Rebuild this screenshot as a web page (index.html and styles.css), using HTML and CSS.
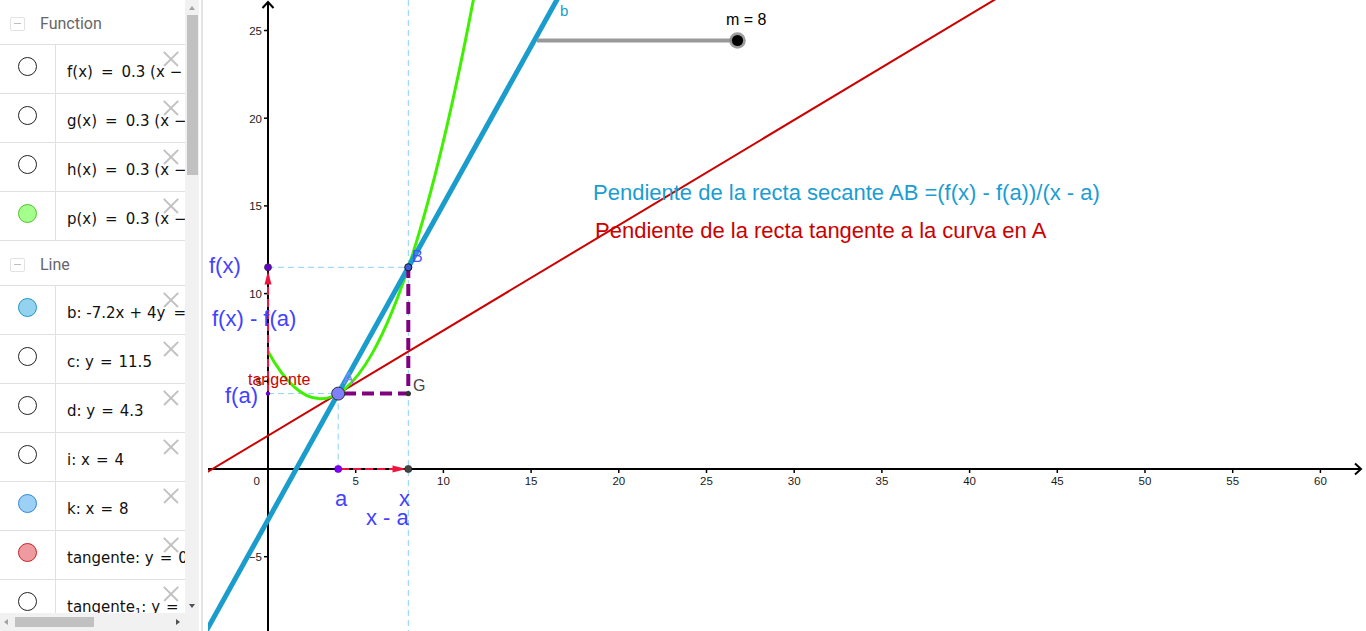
FILE: index.html
```html
<!DOCTYPE html>
<html lang="es">
<head>
<meta charset="utf-8">
<title>Pendiente de la recta secante</title>
<link rel="stylesheet" href="styles.css">
</head>
<body>
<aside class="sidebar">
  <div class="list">
    <section class="group">
      <div class="head"><span class="collapse"></span><span class="head-title">Function</span></div>
      <div class="row"><div class="vis"><span class="dot"></span></div><div class="expr">f(x)<span class="rel">=</span>0.3 (x<span class="bin">−</span>3)<sup>2</sup><span class="bin">+</span>4</div><span class="del"></span></div>
      <div class="row"><div class="vis"><span class="dot"></span></div><div class="expr">g(x)<span class="rel">=</span>0.3 (x<span class="bin">−</span>3)<sup>2</sup><span class="bin">+</span>4</div><span class="del"></span></div>
      <div class="row"><div class="vis"><span class="dot"></span></div><div class="expr">h(x)<span class="rel">=</span>0.3 (x<span class="bin">−</span>3)<sup>2</sup><span class="bin">+</span>4</div><span class="del"></span></div>
      <div class="row"><div class="vis"><span class="dot green"></span></div><div class="expr">p(x)<span class="rel">=</span>0.3 (x<span class="bin">−</span>3)<sup>2</sup><span class="bin">+</span>4</div><span class="del"></span></div>
    </section>
    <section class="group next">
      <div class="head"><span class="collapse"></span><span class="head-title">Line</span></div>
      <div class="row"><div class="vis"><span class="dot cyan"></span></div><div class="expr">b: -7.2x<span class="bin">+</span>4y<span class="rel">=</span>-11.6</div><span class="del"></span></div>
      <div class="row"><div class="vis"><span class="dot"></span></div><div class="expr">c: y<span class="rel r2">=</span>11.5</div><span class="del"></span></div>
      <div class="row"><div class="vis"><span class="dot"></span></div><div class="expr">d: y<span class="rel r2">=</span>4.3</div><span class="del"></span></div>
      <div class="row"><div class="vis"><span class="dot"></span></div><div class="expr">i: x<span class="rel r2">=</span>4</div><span class="del"></span></div>
      <div class="row"><div class="vis"><span class="dot blue"></span></div><div class="expr">k: x<span class="rel r2">=</span>8</div><span class="del"></span></div>
      <div class="row"><div class="vis"><span class="dot red"></span></div><div class="expr">tangente: y<span class="rel r2">=</span>0.6x<span class="bin">+</span>1.9</div><span class="del"></span></div>
      <div class="row"><div class="vis"><span class="dot"></span></div><div class="expr">tangente<sub>1</sub>: y<span class="rel r2">=</span>1.8x<span class="bin">−</span>2.9</div><span class="del"></span></div>
    </section>
  </div>
  <div class="vscroll">
    <div class="arrow-box"><span class="arr up"></span></div>
    <div class="vthumb"></div>
    <div class="spacer"></div>
    <div class="arrow-box"><span class="arr down"></span></div>
  </div>
  <div class="hscroll">
    <div class="harrow-box left-box"><span class="arr left"></span></div>
    <div class="hthumb"></div>
    <div class="spacer"></div>
    <div class="harrow-box"><span class="arr right"></span></div>
  </div>
  <div class="corner"></div>
</aside>
<div class="divider"><div class="divider-line"></div></div>
<main class="graph">
<svg class="canvas" width="1158" height="631" viewBox="208 0 1158 631" xmlns="http://www.w3.org/2000/svg">
  <!-- auxiliary dashed lines -->
  <g stroke="#8ed2f2" stroke-width="1" stroke-dasharray="6 4" fill="none">
    <line x1="408.3" y1="0" x2="408.3" y2="631"/>
    <line x1="338.2" y1="393.6" x2="338.2" y2="469"/>
    <line x1="268" y1="267.3" x2="408.3" y2="267.3"/>
    <line x1="268" y1="393.6" x2="338.2" y2="393.6"/>
  </g>
  <!-- axes -->
  <g stroke="#000" stroke-width="2" fill="none">
    <line x1="208" y1="469" x2="1361" y2="469"/>
    <polyline points="1355,463.5 1361,469 1355,474.5"/>
    <line x1="268" y1="631" x2="268" y2="2"/>
    <polyline points="262.5,8 268,2 273.5,8"/>
  </g>
  <g stroke="#000" stroke-width="1.5">
    <line x1="355.7" y1="469" x2="355.7" y2="473"/>
    <line x1="443.4" y1="469" x2="443.4" y2="473"/>
    <line x1="531.1" y1="469" x2="531.1" y2="473"/>
    <line x1="618.8" y1="469" x2="618.8" y2="473"/>
    <line x1="706.5" y1="469" x2="706.5" y2="473"/>
    <line x1="794.2" y1="469" x2="794.2" y2="473"/>
    <line x1="881.9" y1="469" x2="881.9" y2="473"/>
    <line x1="969.6" y1="469" x2="969.6" y2="473"/>
    <line x1="1057.3" y1="469" x2="1057.3" y2="473"/>
    <line x1="1145" y1="469" x2="1145" y2="473"/>
    <line x1="1232.7" y1="469" x2="1232.7" y2="473"/>
    <line x1="1320.4" y1="469" x2="1320.4" y2="473"/>
    <line x1="264" y1="556.7" x2="268" y2="556.7"/>
    <line x1="264" y1="381.3" x2="268" y2="381.3"/>
    <line x1="264" y1="293.6" x2="268" y2="293.6"/>
    <line x1="264" y1="205.9" x2="268" y2="205.9"/>
    <line x1="264" y1="118.2" x2="268" y2="118.2"/>
    <line x1="264" y1="30.5" x2="268" y2="30.5"/>
  </g>
  <g class="tick" text-anchor="middle">
    <text x="355.7" y="485">5</text>
    <text x="443.4" y="485">10</text>
    <text x="531.1" y="485">15</text>
    <text x="618.8" y="485">20</text>
    <text x="706.5" y="485">25</text>
    <text x="794.2" y="485">30</text>
    <text x="881.9" y="485">35</text>
    <text x="969.6" y="485">40</text>
    <text x="1057.3" y="485">45</text>
    <text x="1145" y="485">50</text>
    <text x="1232.7" y="485">55</text>
    <text x="1320.4" y="485">60</text>
  </g>
  <g class="tick" text-anchor="end">
    <text x="260" y="485">0</text>
    <text x="262" y="561">−5</text>
    <text x="262" y="385.6">5</text>
    <text x="262" y="297.9">10</text>
    <text x="262" y="210.2">15</text>
    <text x="262" y="122.5">20</text>
    <text x="262" y="34.8">25</text>
  </g>
  <!-- tangent line -->
  <line x1="197.8" y1="477.8" x2="1057.3" y2="-37.9" stroke="#cc0000" stroke-width="2"/>
  <!-- function p -->
  <path d="M268,351.5 Q371.5,537.8 475,-8.6" stroke="#3ff000" stroke-width="3" fill="none"/>
  <!-- secant b -->
  <line x1="197.8" y1="646.2" x2="566.2" y2="-16.9" stroke="#1a9ccc" stroke-width="5"/>
  <!-- purple dashed legs -->
  <path d="M344,393.6 H408.3 V267.3" stroke="#800080" stroke-width="4" stroke-dasharray="12 6" fill="none"/>
  <!-- red vectors -->
  <g stroke="#f0143c" stroke-width="2" stroke-dasharray="8 4">
    <line x1="268" y1="391" x2="268" y2="284"/>
    <line x1="341" y1="469" x2="393" y2="469"/>
  </g>
  <g fill="#f0143c">
    <polygon points="268,271 264.5,284.5 271.5,284.5"/>
    <polygon points="406.5,469 392.5,465.5 392.5,472.5"/>
  </g>
  <!-- points -->
  <circle cx="268" cy="267.3" r="3.5" fill="#6a00d0" stroke="#333" stroke-width="0.8"/>
  <circle cx="268" cy="393.6" r="2.2" fill="#6a00d0"/>
  <circle cx="338.2" cy="469" r="3.6" fill="#7f00ff" stroke="#4a0090" stroke-width="0.6"/>
  <circle cx="408.3" cy="469" r="3.6" fill="#444" stroke="#222" stroke-width="0.6"/>
  <circle cx="408.3" cy="393.6" r="2.6" fill="#333"/>
  <circle cx="408.3" cy="267.3" r="3.6" fill="#3a5bd9" stroke="#111" stroke-width="1"/>
  <circle cx="338.2" cy="393.6" r="6.5" fill="#8080ff" stroke="#333" stroke-width="1"/>
  <!-- labels -->
  <text class="lbl" x="209" y="273">f(x)</text>
  <text class="lbl" x="212" y="326">f(x) - f(a)</text>
  <text class="lbl" x="225" y="403">f(a)</text>
  <text class="lbl" x="335" y="506">a</text>
  <text class="lbl" x="399" y="506">x</text>
  <text class="lbl" x="366" y="525">x - a</text>
  <text class="tan" x="248" y="385">tangente</text>
  <text class="pt pt-a" x="343" y="384">A</text>
  <text class="pt pt-b" x="412" y="262">B</text>
  <text class="pt pt-g" x="413" y="391">G</text>
  <text class="lb-b" x="560" y="15.5">b</text>
  <!-- slider -->
  <line x1="537" y1="40.5" x2="737" y2="40.5" stroke="#999" stroke-width="4"/>
  <circle cx="737.5" cy="40.5" r="8.3" fill="#8c8c8c" fill-opacity="0.85"/>
  <circle cx="737.5" cy="40.5" r="5.6" fill="#000"/>
  <text class="slider-lbl" x="726" y="25">m = 8</text>
  <!-- texts -->
  <text class="note note-sec" x="593" y="200">Pendiente de la recta secante AB =(f(x) - f(a))/(x - a)</text>
  <text class="note note-tan" x="595" y="238">Pendiente de la recta tangente a la curva en A</text>
</svg>
</main>
</body>
</html>
```
FILE: styles.css
```css
html, body {
  margin: 0;
  padding: 0;
}
body {
  width: 1366px;
  height: 631px;
  overflow: hidden;
  display: flex;
  background: #fff;
  font-family: "Liberation Sans", Arial, sans-serif;
}

/* ---------- sidebar ---------- */
.sidebar {
  flex: none;
  width: 199px;
  height: 631px;
  display: grid;
  grid-template-columns: 185px 14px;
  grid-template-rows: 613px 18px;
}
.list {
  overflow: hidden;
  background: #fff;
}
.group.next {
  border-top: 1px solid #e0e0e0;
}
.head {
  height: 44px;
  box-sizing: border-box;
  padding: 3px 0 0 10px;
  display: flex;
  align-items: center;
}
.collapse {
  width: 13px;
  height: 12px;
  border: 1px solid #e2e2e2;
  border-radius: 2px;
  display: flex;
  align-items: center;
  justify-content: center;
}
.collapse::before {
  content: "";
  width: 7px;
  height: 1.5px;
  background: #bdbdbd;
}
.head-title {
  margin-left: 15px;
  font-family: Roboto, "Open Sans", sans-serif;
  font-size: 16px;
  color: #666;
}
.row {
  position: relative;
  height: 48px;
  border-top: 1px solid #e0e0e0;
  display: flex;
  white-space: nowrap;
}
.vis {
  flex: none;
  width: 56px;
  border-right: 1px solid #e0e0e0;
  display: flex;
  justify-content: center;
  align-items: flex-start;
  padding-top: 12px;
  box-sizing: border-box;
}
.dot {
  width: 17px;
  height: 17px;
  border: 1px solid #222;
  border-radius: 50%;
  background: #fff;
}
.dot.green { background: #a4ff8c; border-color: #4fc22a; }
.dot.cyan { background: #93d3ef; border-color: #1f95c6; }
.dot.blue { background: #9dd0f5; border-color: #2f86d8; }
.dot.red { background: #ee9ba0; border-color: #cc1f24; }
.expr {
  padding: 18px 0 0 11px;
  font-family: "DejaVu Sans", sans-serif;
  font-size: 15px;
  line-height: 18px;
  color: #111;
}
.expr sup {
  font-size: 10px;
  line-height: 0;
}
.expr sub {
  font-size: 10px;
  line-height: 0;
}
.rel { margin: 0 8px; }
.rel.r2 { margin: 0 6px; }
.bin { margin: 0 5px; }
.del {
  position: absolute;
  left: 163px;
  top: 6px;
  width: 16px;
  height: 16px;
}
.del::before, .del::after {
  content: "";
  position: absolute;
  left: -2px;
  top: 7px;
  width: 20px;
  height: 1.6px;
  background: #c2c2c2;
  transform: rotate(45deg);
}
.del::after { transform: rotate(-45deg); }

/* scrollbars */
.vscroll {
  background: #f1f1f1;
  display: flex;
  flex-direction: column;
  align-items: center;
}
.arrow-box {
  flex: none;
  height: 15px;
  width: 14px;
  display: flex;
  align-items: center;
  justify-content: center;
}
.vthumb {
  flex: none;
  width: 11px;
  height: 160px;
  background: #c1c1c1;
}
.spacer { flex: 1; }
.arr { width: 0; height: 0; }
.arr.up {
  border-left: 3.5px solid transparent;
  border-right: 3.5px solid transparent;
  border-bottom: 4px solid #a3a3a3;
}
.arr.down {
  border-left: 3.5px solid transparent;
  border-right: 3.5px solid transparent;
  border-top: 4px solid #505050;
}
.hscroll {
  background: #f1f1f1;
  display: flex;
  align-items: center;
}
.harrow-box {
  flex: none;
  width: 15px;
  height: 18px;
  display: flex;
  align-items: center;
  justify-content: center;
}
.left-box { width: 14px; justify-content: flex-start; padding-left: 4px; box-sizing: border-box; }
.hthumb {
  flex: none;
  width: 79px;
  height: 10px;
  margin-left: 1px;
  background: #c1c1c1;
}
.arr.left {
  border-top: 3.5px solid transparent;
  border-bottom: 3.5px solid transparent;
  border-right: 4px solid #a3a3a3;
}
.arr.right {
  border-top: 3.5px solid transparent;
  border-bottom: 3.5px solid transparent;
  border-left: 4px solid #505050;
}
.corner { background: #f1f1f1; }

.divider {
  flex: none;
  width: 9px;
  height: 631px;
  background: #fff;
  display: flex;
}
.divider-line {
  width: 2px;
  margin-left: 2px;
  background: #e4e4e4;
}

/* ---------- graphics ---------- */
.graph {
  flex: 1;
  height: 631px;
  overflow: hidden;
}
.canvas { display: block; }
.tick {
  font-family: "Liberation Sans", Arial, sans-serif;
  font-size: 11.5px;
  fill: #1a1a1a;
}
.lbl {
  font-family: "Liberation Sans", Arial, sans-serif;
  font-size: 22px;
  fill: #4242ff;
}
.tan {
  font-family: "Liberation Sans", Arial, sans-serif;
  font-size: 16px;
  fill: #cc0000;
}
.pt {
  font-family: "Liberation Sans", Arial, sans-serif;
  font-size: 16px;
}
.pt-a { fill: #8585ff; }
.pt-b { fill: #4d4dff; }
.pt-g { fill: #444; }
.lb-b {
  font-family: "Liberation Sans", Arial, sans-serif;
  font-size: 15px;
  fill: #1a9ccc;
}
.slider-lbl {
  font-family: "Liberation Sans", Arial, sans-serif;
  font-size: 16px;
  fill: #000;
}
.note {
  font-family: "Liberation Sans", Arial, sans-serif;
  font-size: 22px;
}
.note-sec { fill: #1a9dd2; }
.note-tan { fill: #cc0000; }
```
